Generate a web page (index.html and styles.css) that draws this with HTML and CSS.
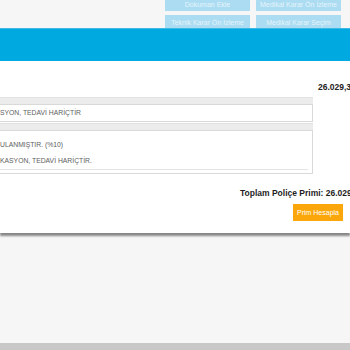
FILE: index.html
```html
<!DOCTYPE html>
<html lang="tr">

<head>
    <meta charset="UTF-8">
    <meta name="viewport" content="width=device-width, initial-scale=1.0">
    <title>Poliçe Prim Hesaplama</title>
    <link rel="stylesheet" href="styles.css">
</head>

<body>

    <!-- Page toolbar (behind the modal) -->
    <div class="toolbar">
        <div class="toolbar-row">
            <button class="tool-btn">Dokuman Ekle</button>
            <button class="tool-btn">Medikal Karar Ön İzleme</button>
        </div>
        <div class="toolbar-row">
            <button class="tool-btn">Teknik Karar Ön İzleme</button>
            <button class="tool-btn">Medikal Karar Seçim</button>
        </div>
    </div>

    <div class="page-footer"></div>

    <!-- Modal -->
    <div class="modal">
        <div class="modal-header"></div>
        <div class="modal-body">
            <div class="amount">26.029,3</div>

            <div class="panel">
                <div class="panel-head"></div>
                <div class="panel-box">
                    <div class="panel-line">SYON, TEDAVİ HARİÇTİR</div>
                </div>
                <div class="panel-head"></div>
                <div class="panel-box tall">
                    <div class="panel-line">ULANMIŞTIR. (%10)</div>
                    <div class="panel-line last">KASYON, TEDAVİ HARİÇTİR.</div>
                </div>
            </div>

            <div class="total">Toplam Poliçe Primi: 26.029</div>
            <div class="actions">
                <button class="calc-btn">Prim Hesapla</button>
            </div>
        </div>
    </div>

</body>

</html>
```

FILE: styles.css
```css
body {
    font-family: "Liberation Sans", Arial, sans-serif;
    margin: 0;
    padding: 0;
    width: 350px;
    height: 350px;
    overflow: hidden;
    background-color: #f6f6f6;
    position: relative;
}

/* Toolbar behind the modal */
.toolbar {
    display: flex;
    flex-direction: column;
    gap: 4px;
    margin-top: -3px;
    padding-left: 165px;
}

.toolbar-row {
    display: flex;
    gap: 6px;
}

.tool-btn {
    width: 85px;
    height: 14px;
    padding: 0;
    border: none;
    background-color: #abdcf2;
    color: #e4f4fb;
    font-family: inherit;
    font-size: 7px;
    white-space: nowrap;
    overflow: hidden;
}

.page-footer {
    position: absolute;
    left: 0;
    right: 0;
    bottom: 0;
    height: 7px;
    background-color: #c8c8c8;
}

/* Modal */
.modal {
    position: absolute;
    top: 28px;
    left: 0;
    width: 350px;
    height: 205px;
    background-color: #fff;
    box-shadow: 0 3px 2px rgba(0, 0, 0, 0.45);
}

.modal-header {
    height: 33px;
    background-color: #00a9e0;
    border-top: 1px solid #3bb8e4;
    box-sizing: border-box;
}

.modal-body {
    padding-top: 21px;
}

.amount {
    margin-left: 318px;
    font-size: 8.5px;
    font-weight: bold;
    color: #222;
    white-space: nowrap;
    line-height: 10px;
}

/* Coverage list */
.panel {
    width: 313px;
    margin-top: 5px;
}

.panel-head {
    height: 6px;
    background-color: #ececec;
    border-top: 1px solid #e2e2e2;
}

.panel-box {
    border: 1px solid #d9d9d9;
    border-left: none;
    margin-bottom: 1px;
}

.panel-box.tall {
    padding-top: 6px;
}

.panel-line {
    font-size: 6.8px;
    color: #5e5e5e;
    line-height: 16px;
    white-space: nowrap;
}

.panel-line.last {
    border-bottom: 1px solid #e4e4e4;
    margin-right: 4px;
    margin-bottom: 3px;
}

.total {
    margin-top: 14px;
    margin-left: 240px;
    font-size: 8.5px;
    font-weight: bold;
    color: #1e1e1e;
    white-space: nowrap;
    line-height: 10px;
}

.actions {
    margin-top: 3px;
    padding-left: 293px;
}

.calc-btn {
    width: 50px;
    height: 17px;
    padding: 0;
    border: none;
    background-color: #fba70b;
    color: #fff;
    font-family: inherit;
    font-size: 7px;
}
```
